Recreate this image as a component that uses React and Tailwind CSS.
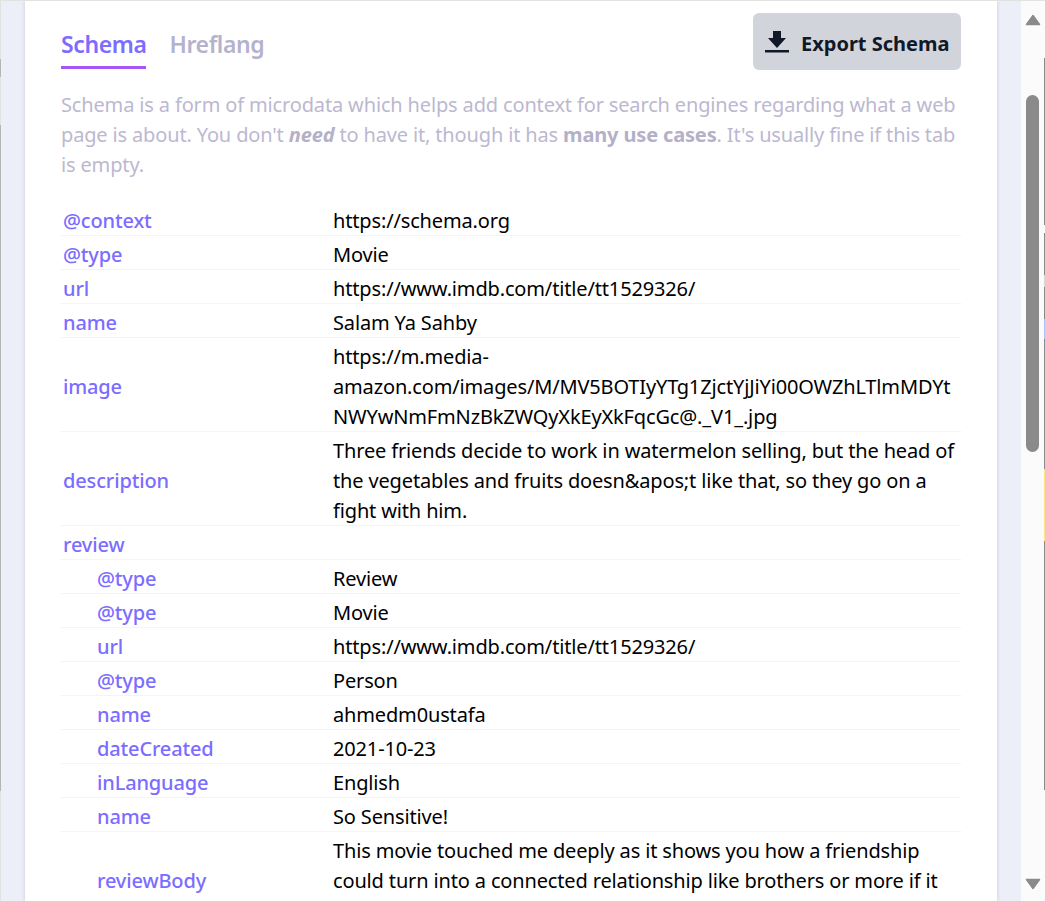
const rows = [
  { k: "@context", v: "https://schema.org" },
  { k: "@type", v: "Movie" },
  { k: "url", v: "https://www.imdb.com/title/tt1529326/" },
  { k: "name", v: "Salam Ya Sahby" },
  {
    k: "image",
    v: "https://m.media-amazon.com/images/M/MV5BOTIyYTg1ZjctYjJiYi00OWZhLTlmMDYtNWYwNmFmNzBkZWQyXkEyXkFqcGc@._V1_.jpg",
  },
  {
    k: "description",
    v: "Three friends decide to work in watermelon selling, but the head of the vegetables and fruits doesn&apos;t like that, so they go on a fight with him.",
  },
  { k: "review", v: "" },
  { k: "@type", v: "Review", sub: true },
  { k: "@type", v: "Movie", sub: true },
  { k: "url", v: "https://www.imdb.com/title/tt1529326/", sub: true },
  { k: "@type", v: "Person", sub: true },
  { k: "name", v: "ahmedm0ustafa", sub: true },
  { k: "dateCreated", v: "2021-10-23", sub: true },
  { k: "inLanguage", v: "English", sub: true },
  { k: "name", v: "So Sensitive!", sub: true },
  {
    k: "reviewBody",
    v: "This movie touched me deeply as it shows you how a friendship could turn into a connected relationship like brothers or more if it was true and honest between them all along the way.",
    sub: true,
  },
];

const SchemaRow = ({ k, v, sub }) => (
  <div className="grid grid-cols-[272px_minmax(0,1fr)] items-center border-b border-[#f3f4f6] pt-[2px] pb-[1px]">
    <div className={`translate-y-[2px] font-medium text-[#7c6cff] ${sub ? "pl-[36px]" : "pl-[2px]"}`}>{k}</div>
    <div className="min-h-[30px] translate-y-[2px] text-black [overflow-wrap:anywhere]">{v}</div>
  </div>
);

export default function App() {
  return (
    <div
      className="flex h-[901px] overflow-hidden border-t border-[#e2e2e2] bg-[#eceff8] text-[20px] leading-[30px] tracking-[-0.15px]"
      style={{ fontFamily: '"Noto Sans", sans-serif' }}
    >
      <div className="flex w-[25px] shrink-0">
        {/* thin strip of the page behind, left edge */}
        <div className="flex w-px flex-col">
          <div className="h-[58px] bg-[#e2e2e2]" />
          <div className="h-[18px] bg-[#b5b5b5]" />
          <div className="h-[48px] bg-[#e2e2e2]" />
          <div className="h-[666px] bg-[#b5b5b5]" />
          <div className="flex-1 bg-[#e2e2e2]" />
        </div>
      </div>
      <main className="w-[972px] shrink-0 bg-white px-[36px] pt-[12px] shadow-[0_0_4px_rgba(0,0,0,0.15)]">
        <div className="flex items-start justify-between">
          <div className="flex gap-[23px] pt-[12px]">
            <div className="border-b-[3px] border-[#a855f7] pt-[1px] pb-[4px] text-[23px] leading-[36px] font-semibold tracking-[-0.4px] text-[#7c6cff]">
              Schema
            </div>
            <div className="pt-[1px] text-[23px] leading-[36px] font-semibold tracking-[-0.4px] text-[#b4b2cc]">
              Hreflang
            </div>
          </div>
          <button className="flex h-[57px] w-[208px] items-center gap-[12px] rounded-md bg-[#d1d5db] pl-[12px] font-bold tracking-normal text-[#111827]">
            <svg width="24" height="22" viewBox="0 0 24 22" fill="#111827">
              <path d="M8 0h8v7h5l-9 10L3 7h5z" />
              <rect x="0" y="19" width="24" height="2.5" />
            </svg>
            <span className="pt-[4px]">Export Schema</span>
          </button>
        </div>
        <p className="mt-[20px] mb-[22px] text-[#bcb8d0]">
          Schema is a form of microdata which helps add context for search engines regarding what a web page is about.
          You don't <em className="font-bold text-[#b4b0c8]">need</em> to have it, though it has{" "}
          <b className="text-[#b4b0c8]">many use cases</b>. It's usually fine if this tab is empty.
        </p>
        <div>
          {rows.map((r, i) => (
            <SchemaRow key={i} {...r} />
          ))}
        </div>
      </main>
      <div className="w-[24px] shrink-0" />
      <div className="relative flex w-[24px] shrink-0 justify-end bg-[#fbfbfb]">
        <svg className="absolute top-[13px] left-[4px]" width="16" height="12" viewBox="0 0 16 12">
          <path d="M8 1.5 L14.5 10.5 H1.5 Z" fill="#8a8a8a" stroke="#8a8a8a" strokeWidth="1.5" strokeLinejoin="round" />
        </svg>
        <div className="absolute top-[94px] left-[5px] h-[357px] w-[13px] rounded-full bg-[#8a8a8a]" />
        <svg className="absolute top-[877px] left-[4px]" width="16" height="12" viewBox="0 0 16 12">
          <path d="M8 10.5 L14.5 1.5 H1.5 Z" fill="#8a8a8a" stroke="#8a8a8a" strokeWidth="1.5" strokeLinejoin="round" />
        </svg>
        {/* thin strip of the page behind, right edge */}
        <div className="flex w-px flex-col">
          <div className="h-[57px]" />
          <div className="h-[167px] bg-[#8a8a8a]" />
          <div className="h-[8px] bg-white" />
          <div className="h-[42px] bg-[#8a8a8a]" />
          <div className="h-[12px] bg-[#d8d8d8]" />
          <div className="h-[32px] bg-[#8a8a8a]" />
          <div className="h-[20px] bg-[#a9c4f5]" />
          <div className="h-[130px] bg-[#8a8a8a]" />
          <div className="h-[72px] bg-[#fde68a]" />
          <div className="h-[249px] bg-[#8a8a8a]" />
        </div>
      </div>
    </div>
  );
}
